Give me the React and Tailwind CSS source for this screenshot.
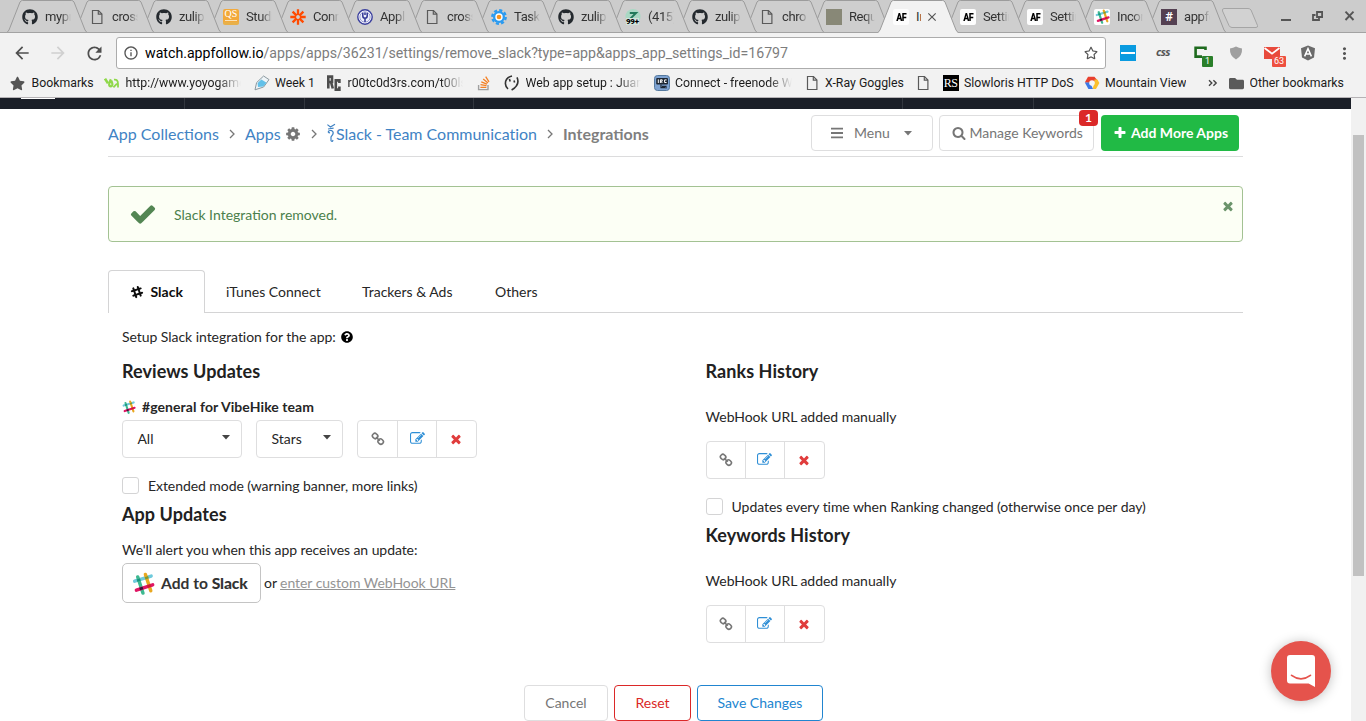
import React from "react";
import { FaGithub, FaSlackHash, FaQuestionCircle, FaStar, FaFolder, FaRegStar } from "react-icons/fa";
import { MdArrowBack, MdArrowForward, MdRefresh, MdInfoOutline, MdClose, MdMoreVert } from "react-icons/md";

const PATHS = {
  check: "M1671 566q0 40-28 68l-724 724-136 136q-28 28-68 28t-68-28l-136-136-362-362q-28-28-28-68t28-68l136-136q28-28 68-28t68 28l294 295 656-657q28-28 68-28t68 28l136 136q28 28 28 68z",
  times: "M1490 1322q0 40-28 68l-136 136q-28 28-68 28t-68-28l-294-294-294 294q-28 28-68 28t-68-28l-136-136q-28-28-28-68t28-68l294-294-294-294q-28-28-28-68t28-68l136-136q28-28 68-28t68 28l294 294 294-294q28-28 68-28t68 28l136 136q28 28 28 68t-28 68l-294 294 294 294q28 28 28 68z",
  plus: "M1600 736v192q0 40-28 68t-68 28h-416v416q0 40-28 68t-68 28h-192q-40 0-68-28t-28-68v-416h-416q-40 0-68-28t-28-68v-192q0-40 28-68t68-28h416v-416q0-40 28-68t68-28h192q40 0 68 28t28 68v416h416q40 0 68 28t28 68z",
  search: "M1216 832q0-185-131.5-316.5t-316.5-131.5-316.5 131.5-131.5 316.5 131.5 316.5 316.5 131.5 316.5-131.5 131.5-316.5zm512 832q0 52-38 90t-90 38q-54 0-90-38l-343-342q-179 124-399 124-143 0-273.5-55.5t-225-150-150-225-55.5-273.5 55.5-273.5 150-225 225-150 273.5-55.5 273.5 55.5 225 150 150 225 55.5 273.5q0 220-124 399l343 343q37 37 37 90z",
  cog: "M1152 896q0-106-75-181t-181-75-181 75-75 181 75 181 181 75 181-75 75-181zm512-109v222q0 12-8 23t-20 13l-185 28q-19 54-39 91 35 50 107 138 10 12 10 25t-9 23q-27 37-99 108t-94 71q-12 0-26-9l-138-108q-44 23-91 38-16 136-29 186-7 28-36 28h-222q-14 0-24.5-8.5t-11.5-21.5l-28-184q-49-16-90-37l-141 107q-10 9-25 9-14 0-25-11-126-114-165-168-7-10-7-23 0-12 8-23 15-21 51-66.5t54-70.5q-27-50-41-99l-183-27q-13-2-21-12.5t-8-23.5v-222q0-12 8-23t19-13l186-28q14-46 39-92-40-57-107-138-10-12-10-24 0-10 9-23 26-36 98.5-107.5t94.5-71.5q13 0 26 10l138 107q44-23 91-38 16-136 29-186 7-28 36-28h222q14 0 24.5 8.5t11.5 21.5l28 184q49 16 90 37l142-107q9-9 24-9 13 0 25 10 129 119 165 170 7 8 7 22 0 12-8 23-15 21-51 66.5t-54 70.5q26 50 41 98l183 28q13 2 21 12.5t8 23.5z",
  edit: "M888 1184l116-116-152-152-116 116v56h96v96h56zm440-720q-16-16-33 1l-350 350q-17 17-1 33t33-1l350-350q17-17 1-33zm80 594v190q0 119-84.5 203.5t-203.5 84.5h-832q-119 0-203.5-84.5t-84.5-203.5v-832q0-119 84.5-203.5t203.5-84.5h832q63 0 117 25 15 7 18 23 3 17-9 29l-49 49q-14 14-32 8-23-6-45-6h-832q-66 0-113 47t-47 113v832q0 66 47 113t113 47h832q66 0 113-47t47-113v-126q0-13 9-22l64-64q15-15 35-7t20 29zm-96-738l288 288-672 672h-288v-288zm444 132l-92 92-288-288 92-92q28-28 68-28t68 28l152 152q28 28 28 68t-28 68z",
};

function Glyph({ name, className }) {
  return (
    <svg viewBox="0 0 1792 1792" fill="currentColor" className={"shrink-0 " + className}>
      <path d={PATHS[name]} />
    </svg>
  );
}

function LinkGlyph() {
  return (
    <svg viewBox="0 0 14 14" fill="none" stroke="currentColor" strokeWidth="1.6" className="size-[14px]">
      <rect x="1.4" y="1.6" width="5.4" height="4.8" rx="2.2" transform="rotate(45 4.1 4)" />
      <rect x="7" y="7.2" width="5.4" height="4.8" rx="2.2" transform="rotate(45 9.7 9.6)" />
      <path d="M5 5 8.8 8.8" />
    </svg>
  );
}

function SlackColor({ className }) {
  return (
    <svg viewBox="0 0 24 24" fill="none" strokeWidth="3.6" strokeLinecap="round" className={"shrink-0 " + className}>
      <path d="M2.8 9.6 20 4.2" stroke="#6ecadc" />
      <path d="M14 2.6 19.6 19.6" stroke="#e9a820" />
      <path d="M6 5.2 11.4 22" stroke="#3eb991" />
      <path d="M4.6 19 21.6 13.4" stroke="#e01563" />
      <path d="M6.6 7.2 7.3 9.6" stroke="#1a937d" strokeLinecap="butt" />
      <path d="M15 4.8 15.8 7.2" stroke="#7a9a35" strokeLinecap="butt" />
      <path d="M9.3 16 10.1 18.6" stroke="#361238" strokeLinecap="butt" />
      <path d="M17.4 13.4 18.2 15.8" stroke="#cc2027" strokeLinecap="butt" />
    </svg>
  );
}

function PageIcon() {
  return (
    <svg viewBox="0 0 16 16" fill="none" stroke="#5a5a5a" strokeWidth="1.2" className="size-4 shrink-0">
      <path d="M3.5 1.5H9.5L12.9 5V14.5H3.5Z" />
      <path d="M9.3 1.5V5.2H12.9" />
    </svg>
  );
}

function Github() {
  return <FaGithub className="size-4 shrink-0 text-[#24292e]" />;
}

function AfIcon() {
  return (
    <span className="flex size-4 shrink-0 items-center justify-center rounded-[2px] bg-[#fdfdfd] pt-px text-[11px] leading-[15px] font-black tracking-[-0.5px] text-black">
      <span className="scale-x-[.82]">AF</span>
    </span>
  );
}

function StudyIcon() {
  return (
    <span className="flex size-4 shrink-0 flex-col items-center rounded-[2px] border-b-[3px] border-[#e8b04a] bg-[#f2a93b] font-['Liberation_Serif',serif] text-[10px] leading-[10px] text-white">
      QS
      <span className="mt-px h-px w-3 bg-[#fbe3b8]" />
    </span>
  );
}

function Burst() {
  return (
    <svg viewBox="0 0 16 16" stroke="#ff4a00" strokeWidth="2.3" className="size-4 shrink-0">
      <path d="M8 .3V6M8 10v5.7M.3 8H6M10 8h5.7M2.6 2.6 6.4 6.4M9.6 9.6l3.8 3.8M13.4 2.6 9.6 6.4M6.4 9.6l-3.8 3.8" />
      <circle cx="8" cy="8" r="2.6" fill="none" strokeWidth="1.4" />
    </svg>
  );
}

function AppRound() {
  return (
    <svg viewBox="0 0 16 16" className="size-4 shrink-0">
      <circle cx="8" cy="8" r="7.2" fill="#fff" stroke="#3a3f9e" strokeWidth="1.4" />
      <circle cx="8" cy="8" r="5.2" fill="#eceefa" stroke="#8084c8" strokeWidth=".8" />
      <path d="M5.8 4v3a2.2 2.2 0 0 0 4.4 0V4M8 3.4V6M8 9V13" fill="none" stroke="#2f3494" strokeWidth="1.5" />
    </svg>
  );
}

function GearBlue() {
  return (
    <svg viewBox="0 0 16 16" className="size-4 shrink-0">
      <circle cx="8" cy="8" r="6.7" fill="none" stroke="#2c9bf0" strokeWidth="2.4" strokeDasharray="3.1 2.16" />
      <circle cx="8" cy="8" r="6" fill="#2c9bf0" />
      <circle cx="8" cy="8" r="3.7" fill="#fff" />
      <circle cx="8" cy="8" r="2.3" fill="#f7931e" />
    </svg>
  );
}

function ZulipIcon() {
  return (
    <span className="relative size-4 shrink-0">
      <svg viewBox="0 0 16 16" className="size-4">
        <circle cx="8" cy="7.6" r="7.6" fill="#a9d8c4" />
        <path d="M4.8 4H11L5.4 9.6" fill="none" stroke="#22795a" strokeWidth="2" />
      </svg>
      <span className="absolute top-[9px] left-[1px] bg-[#d0e2da] text-[8px] leading-[7px] font-black tracking-[-0.3px] text-black">99+</span>
    </span>
  );
}

function SlackFav() {
  return (
    <span className="flex size-4 shrink-0 items-center justify-center rounded-[2px] bg-white">
      <SlackColor className="size-[15px]" />
    </span>
  );
}

function HashFav() {
  return <span className="flex size-4 shrink-0 items-center justify-center bg-[#544052] text-[13px] font-bold text-white">#</span>;
}

const TABS = [
  [Github, "mypr"],
  [PageIcon, "cross"],
  [Github, "zulip"],
  [StudyIcon, "Studi"],
  [Burst, "Conn"],
  [AppRound, "Appl"],
  [PageIcon, "cross"],
  [GearBlue, "Task"],
  [Github, "zulip"],
  [ZulipIcon, "(415)"],
  [Github, "zulip"],
  [PageIcon, "chro"],
  [null, "Requ"],
  [AfIcon, "In"],
  [AfIcon, "Settin"],
  [AfIcon, "Settin"],
  [SlackFav, "Incor"],
  [HashFav, "appfo"],
];

function Tab({ Icon, label, active, order }) {
  return (
    <div className="relative -mr-[13px] h-[33px] w-[80px] shrink-0" style={{ zIndex: order }}>
      <svg viewBox="0 0 80 33" className="absolute inset-0 h-[33px] w-[80px]">
        <path d="M0 33 L2 30 L13 2 Q14 .5 15.5 .5 H64.5 Q66 .5 67 2 L78 30 L80 33Z" fill={active ? "#f2f2f2" : "#cecece"} />
        <path d="M0 32.5 L2 30 L13 2 Q14 .5 15.5 .5 H64.5 Q66 .5 67 2 L78 30 L80 32.5" fill="none" stroke="#9c9c9c" strokeWidth="1" />
        {!active && <path d="M0 32.5H80" stroke="#a3a3a3" />}
      </svg>
      <div className="relative flex h-full items-center gap-[7px] pl-[15.5px]">
        {Icon ? <Icon /> : <span className="size-4 shrink-0 bg-[#888877]" />}
        {active ? (
          <>
            <span className="w-[5px] overflow-hidden text-[13px] text-[#333]">{label}</span>
            <MdClose className="-ml-[3px] size-[14px] shrink-0 text-[#555]" />
          </>
        ) : (
          <span className="w-[26px] overflow-hidden mask-r-from-60% text-[13px] tracking-[-0.4px] whitespace-nowrap text-[#333]">{label}</span>
        )}
      </div>
    </div>
  );
}

function TabStrip() {
  return (
    <div className="flex h-[33px] border-b border-[#a3a3a3] bg-[#cccccc] pl-[6.5px]">
      {TABS.map(([Icon, label], i) => (
        <Tab key={i} Icon={Icon} label={label} active={i === 13} order={i === 13 ? 40 : 30 - i} />
      ))}
      <svg viewBox="0 0 38 20" className="mt-2 ml-[8px] h-5 w-[38px] shrink-0">
        <path d="M3 .5H27Q29 .5 30 2L36.5 17.5Q37 19.5 35 19.5H11Q9 19.5 8 17.5L1.5 3Q1 .5 3 .5Z" fill="#d2d2d2" stroke="#a5a5a5" />
      </svg>
      <svg viewBox="0 0 80 16" fill="none" stroke="#555" strokeWidth="2" className="mt-2 ml-[21px] h-4 w-20 shrink-0">
        <path d="M1 12H11" />
        <path d="M37 4H42.1V9H37Z M35.5 7H33V12H39V10" strokeWidth="1.8" />
        <path d="M65.5 3.7 73.5 12M73.5 3.7 65.5 12" strokeWidth="1.9" />
      </svg>
    </div>
  );
}

function Toolbar() {
  return (
    <div className="flex h-10 items-center bg-[#f2f2f2]">
      <MdArrowBack className="ml-[12px] size-5 text-[#4f4f4f]" />
      <MdArrowForward className="ml-[16px] size-5 text-[#d0d0d0]" />
      <MdRefresh className="ml-[16px] size-[21px] text-[#4f4f4f]" />
      <div className="ml-[11px] flex h-8 w-[990px] items-center rounded-[3px] border border-[#acacac] bg-white pr-[7px] pl-[6px]">
        <MdInfoOutline className="size-4 text-[#555]" />
        <span className="mt-px ml-[6px] flex-1 text-[14.17px] text-[#7d7d7d]">
          <span className="text-black">watch.appfollow.io</span>/apps/apps/36231/settings/remove_slack?type=app&amp;apps_app_settings_id=16797
        </span>
        <FaRegStar className="size-[14px] text-[#555]" />
      </div>
      <span className="ml-[14px] flex size-4 items-center justify-center bg-[#0a9be0]">
        <span className="h-[2px] w-[14px] bg-white" />
      </span>
      <span className="ml-[20px] w-4 pb-[2px] font-['Open_Sans',sans-serif] text-[11px] leading-3 font-bold tracking-[-0.6px] text-[#555] italic">css</span>
      <span className="relative ml-[21px] size-4">
        <svg viewBox="0 0 16 16" className="size-4" fill="none" stroke="#1f6b1f" strokeWidth="2.6">
          <path d="M12.5 5V2.7H2.6V11.6H9" />
        </svg>
        <span className="absolute top-[11px] left-[9px] flex h-[11px] w-[11px] items-center justify-center rounded-[1px] bg-[#2a7f2a] text-[9px] leading-[11px] text-white">1</span>
      </span>
      <svg viewBox="0 0 16 16" className="ml-[19px] size-4">
        <path d="M8 1.5Q11 3 14 3.6 14.6 11 8 14.6 1.4 11 2 3.6 5 3 8 1.5Z" fill="#9f9f9f" />
      </svg>
      <span className="relative ml-[20px] size-4">
        <svg viewBox="0 0 16 16" className="size-4">
          <path d="M0 2H16V14H0Z" fill="#e84a3c" />
          <path d="M.5 3 8 8.6 15.5 3" fill="none" stroke="#fff" strokeWidth="1.7" />
        </svg>
        <span className="absolute top-[11px] left-[8px] flex h-[11px] w-[14px] items-center justify-center rounded-[1px] bg-[#ee5040] text-[9px] leading-[11px] text-white">63</span>
      </span>
      <svg viewBox="0 0 16 16" className="ml-[20px] size-4">
        <path d="M8 .6 15 3.2 14 12.4 8 15.6 2 12.4 1 3.2Z" fill="#6b6b6b" />
        <path d="M4.6 11.4 8 3.6 11.4 11.4M5.8 9H10.2" fill="none" stroke="#fff" strokeWidth="1.5" />
      </svg>
      <MdMoreVert className="ml-[19px] size-[19px] text-[#555]" />
    </div>
  );
}

function Bookmark({ icon, label, className, fade }) {
  return (
    <div className={"flex shrink-0 items-center gap-[5.5px] " + className}>
      {icon}
      {label && <span className={"overflow-hidden whitespace-nowrap " + (fade ? "flex-1 mask-r-from-80%" : "")}>{label}</span>}
    </div>
  );
}

function BookmarksBar() {
  return (
    <div className="flex h-[25px] items-start border-b border-[#b5b2b5] bg-[#f2f2f2] pt-[2px] pl-[10px] text-[12.3px] leading-4 text-[#1b1b1b]">
      <Bookmark className="w-[94px]" icon={<FaStar className="mr-px size-[15px] text-[#555]" />} label="Bookmarks" />
      <Bookmark
        className="w-[137px]"
        fade
        icon={
          <svg viewBox="0 0 16 16" fill="none" stroke="#8fd84a" strokeWidth="2.6" className="size-4 shrink-0">
            <path d="M1 3.6 4 8.4" />
            <path d="M6.8 4.2Q3.4 11 7 11.4 9.6 11 7.4 5.6" strokeWidth="2.2" />
            <path d="M10 4.6Q14 4 14 9V12.4M13 8.6 9.4 12.4" strokeWidth="1.8" />
          </svg>
        }
        label="http://www.yoyogames.com"
      />
      <Bookmark
        className="ml-[12.5px] w-[72px]"
        icon={
          <svg viewBox="0 0 16 16" className="size-4 shrink-0">
            <path d="M1 14.8 2.6 7.6 9.6 1 15 4.6 9.6 12Z" fill="#eef4f7" stroke="#8a989f" strokeWidth="1" />
            <path d="M3.6 8 7.4 4.6 12.6 7.8 9.2 11.6 4 12Z" fill="#62c0e8" />
          </svg>
        }
        label="Week 1"
      />
      <Bookmark
        className="ml-[.5px] w-[137px]"
        fade
        icon={
          <svg viewBox="0 0 16 16" fill="none" stroke="#4d4d4d" strokeWidth="2.6" className="size-4 shrink-0">
            <path d="M2.3 13.5V1.6H6V7H3M5 7 6.8 13.5M13.4 8V5.4H9.8V14.6H13.4V11.6" />
          </svg>
        }
        label="r00tc0d3rs.com/t00ls.html"
      />
      <Bookmark
        className="ml-[13px] w-[28px]"
        icon={
          <svg viewBox="0 0 16 16" fill="none" className="size-4 shrink-0">
            <path d="M2.6 10V14.6H12V10" stroke="#a0a0a0" strokeWidth="1.4" />
            <path d="M4.4 12.4H10.4M4.5 9.7 10.5 10.6M5.3 6.9 11 9.2M7.2 4 12 8M9.7 1.6 13 6.8" stroke="#f48024" strokeWidth="1.3" />
          </svg>
        }
      />
      <Bookmark
        className="w-[137px]"
        fade
        icon={
          <svg viewBox="0 0 16 16" fill="none" stroke="#333" strokeWidth="1.6" className="size-4 shrink-0">
            <path d="M8 1Q1.4 2.6 1.4 8.6 1.6 12 4 14M13 2.4Q16.4 10 7.6 15M5.4 4 6.2 6.4M10 5.4 10.6 7.4" />
          </svg>
        }
        label="Web app setup : Juan Carlos"
      />
      <Bookmark
        className="ml-[12.5px] w-[138px]"
        fade
        icon={
          <svg viewBox="0 0 16 16" className="size-4 shrink-0">
            <rect x=".5" y=".5" width="15" height="15" rx="3" fill="#7ea3d2" stroke="#55799f" />
            <rect x="2.2" y="3" width="11.8" height="6.4" rx="1" fill="#1d2733" />
            <path d="M4.3 4.4V8M6.4 8V4.8H8.2V6.2H6.6L8.4 8M12.6 4.9H10.6V7.5H12.6" fill="none" stroke="#fff" strokeWidth="1" />
            <path d="M7 9.4V12.6H11M8 11.4H12V13.6" fill="none" stroke="#1d2733" strokeWidth="1.2" />
          </svg>
        }
        label="Connect - freenode Web IRC"
      />
      <Bookmark className="ml-[12px] w-[100px]" icon={<PageIcon />} label="X-Ray Goggles" />
      <Bookmark className="ml-[11px] w-[16px]" icon={<PageIcon />} />
      <Bookmark
        className="ml-[12px] w-[131px]"
        icon={<span className="flex size-4 shrink-0 items-center justify-center bg-black font-['Liberation_Serif',serif] text-[12px] tracking-[-0.5px] text-white">RS</span>}
        label="Slowloris HTTP DoS"
      />
      <Bookmark
        className="ml-[10px] w-[103px]"
        icon={
          <svg viewBox="0 0 16 16" className="size-4 shrink-0">
            <path d="M.8 7.6 4 1.8H10.4L14 6 8 8Z" fill="#e8402e" />
            <path d="M10.4 4.6H13.4L15.4 8 12 14H8.6L10 9Z" fill="#fbc02d" />
            <path d="M.8 7.6H6L9 14H4.4Z" fill="#3b78e7" />
            <circle cx="8" cy="8" r="2.8" fill="#f5f5f5" />
          </svg>
        }
        label="Mountain View"
      />
      <svg viewBox="0 0 10 16" fill="none" stroke="#444" strokeWidth="1.4" className="ml-[21px] h-4 w-[10px]">
        <path d="M1 5.2 3.8 8 1 10.8M5.4 5.2 8.2 8 5.4 10.8" />
      </svg>
      <Bookmark className="ml-[11.5px]" icon={<FaFolder className="size-[15px] text-[#5a5a5a]" />} label="Other bookmarks" />
    </div>
  );
}

function Chevron() {
  return (
    <svg viewBox="0 0 6 10" fill="none" stroke="#777" strokeWidth="1.3" className="h-[10px] w-[6px] shrink-0">
      <path d="M1 1 5 5 1 9" />
    </svg>
  );
}

function Caret({ className }) {
  return (
    <svg viewBox="0 0 8 5" fill="currentColor" className={"h-[5px] w-2 " + className}>
      <path d="M0 0H8L4 4.4Z" />
    </svg>
  );
}

function PageHeader() {
  return (
    <div className="flex h-12 items-start border-b border-[#dcdcdd] pr-1">
      <div className="flex h-[50px] items-center text-[16px] leading-6 text-[#4183c4]">
        <span className="mb-px w-[111px] whitespace-nowrap">App Collections</span>
        <span className="ml-[10px]"><Chevron /></span>
        <span className="mb-px ml-[10px] w-[35px]">Apps</span>
        <Glyph name="cog" className="ml-[5px] size-[16px] text-[#767676]" />
        <span className="ml-[10px]"><Chevron /></span>
        <svg viewBox="0 0 10 20" fill="none" stroke="#4183c4" strokeWidth="1.2" className="mb-[3px] ml-[9px] h-5 w-[10px]">
          <path d="M1.4 1.6 4.4 4 9 1.2M2 6 7.6 5.2M2.2 9.4Q2.4 7 5.6 7.6 8 9 6.8 11.4L5 14V17.6Q6.4 19.4 7 17M2 9.4 4 9.8" />
        </svg>
        <span className="mb-px w-[201px] tracking-[-0.02px] whitespace-nowrap">Slack - Team Communication</span>
        <span className="ml-[10px]"><Chevron /></span>
        <span className="mb-px ml-[10px] font-bold text-[#7f7f7f]">Integrations</span>
      </div>
      <div className="mt-[6px] ml-auto flex gap-[6px] text-[14px] text-[#767676]">
        <div className="flex h-9 w-[122px] items-center rounded-[4px] border border-[#dededf] pl-[19px]">
          <svg viewBox="0 0 12 12" stroke="currentColor" strokeWidth="1.8" className="h-3 w-3">
            <path d="M0 1.6H12M0 6H12M0 10.4H12" />
          </svg>
          <span className="mb-px ml-[11px]">Menu</span>
          <Caret className="ml-[14px]" />
        </div>
        <div className="relative mr-px flex h-9 w-[155px] items-center rounded-[4px] border border-[#dededf] pl-[12px]">
          <Glyph name="search" className="size-[14px]" />
          <span className="mb-px ml-[3.5px] whitespace-nowrap">Manage Keywords</span>
          <span className="absolute -top-[6px] -right-[5px] flex h-4 w-[19px] items-center justify-center rounded-[4px] bg-[#db2828] text-[12px] leading-3 font-bold text-white">1</span>
        </div>
        <div className="flex h-9 w-[138px] items-center rounded-[4px] bg-[#21ba45] pl-[12px] font-bold text-white">
          <Glyph name="plus" className="size-[14px]" />
          <span className="mb-px ml-[4px] whitespace-nowrap">Add More Apps</span>
        </div>
      </div>
    </div>
  );
}

function IconButtons({ className }) {
  return (
    <div className={"flex h-[38px] rounded-[4px] border border-[#dededf] " + className}>
      <span className="flex flex-1 items-center justify-center pb-px text-[#767676]"><LinkGlyph /></span>
      <span className="flex w-[40px] items-center justify-center border-x border-[#dededf] text-[#2f8fd6]"><Glyph name="edit" className="mb-px size-[15px]" /></span>
      <span className="flex w-[39px] items-center justify-center pr-px text-[#e03c3c]"><Glyph name="times" className="size-[14px]" /></span>
    </div>
  );
}

function Select({ label, className }) {
  return (
    <div className={"flex h-[38px] items-center justify-between rounded-[4px] border border-[#dededf] pr-[11px] pl-[14.4px] " + className}>
      {label}
      <Caret className="mb-[3px] text-[#444]" />
    </div>
  );
}

function Check({ label }) {
  return (
    <div className="flex h-[18px] items-start">
      <span className="size-[17px] rounded-[3px] border border-[#d4d4d5]" />
      <span className="ml-[9px] tracking-[-0.06px] whitespace-nowrap">{label}</span>
    </div>
  );
}

function Heading({ children }) {
  return <h3 className="text-[18px] leading-[22px] font-bold tracking-[0.06px] text-[#212121]">{children}</h3>;
}

function Settings() {
  return (
    <div className="flex pl-[14px] text-[14px] leading-[18px] text-[#262626]">
      <div className="w-[583.6px] pt-[15px]">
        <p className="flex items-center tracking-[-0.05px]">
          Setup Slack integration for the app:
          <FaQuestionCircle className="ml-[5px] size-3 text-black" />
        </p>
        <div className="mt-[14px]"><Heading>Reviews Updates</Heading></div>
        <div className="mt-[16px] flex h-[18px] items-center font-bold tracking-[0.07px]">
          <SlackColor className="mr-[6px] size-[14px]" />
          #general for VibeHike team
        </div>
        <div className="mt-[4px] flex gap-[14px]">
          <Select label="All" className="w-[120px]" />
          <Select label="Stars" className="w-[87px]" />
          <IconButtons className="w-[120px]" />
        </div>
        <div className="mt-[19px]"><Check label="Extended mode (warning banner, more links)" /></div>
        <div className="mt-[8px]"><Heading>App Updates</Heading></div>
        <p className="mt-[16px] tracking-[-0.07px]">We'll alert you when this app receives an update:</p>
        <div className="mt-[4px] flex items-center">
          <div className="flex h-10 w-[139px] items-center rounded-[5px] border border-[#c4c4c4] pl-[8.5px] text-[15.6px] font-bold text-[#333]">
            <SlackColor className="mr-[6.5px] size-[23px]" />
            <span className="whitespace-nowrap">Add to <span className="font-black tracking-[-0.1px]">Slack</span></span>
          </div>
          <span className="ml-[3px]">or</span>
          <a className="ml-[3px] tracking-[-0.04px] text-[#949494] underline">enter custom WebHook URL</a>
        </div>
      </div>
      <div className="pt-[47px]">
        <Heading>Ranks History</Heading>
        <p className="mt-[26px] mb-[15px] tracking-[-0.03px]">WebHook URL added manually</p>
        <IconButtons className="w-[119.4px]" />
        <div className="mt-[19px]"><Check label="Updates every time when Ranking changed (otherwise once per day)" /></div>
        <div className="mt-[8px]"><Heading>Keywords History</Heading></div>
        <p className="mt-[26px] mb-[15px] tracking-[-0.03px]">WebHook URL added manually</p>
        <IconButtons className="w-[119.4px]" />
      </div>
    </div>
  );
}

function Page() {
  return (
    <div className="w-[1351px] bg-white font-['Lato',sans-serif]">
      <div className="flex h-[11px] bg-[#1b1f28]">
        <span className="ml-[21px] h-px w-[34px] bg-white" />
        <span className="ml-[129px] w-px bg-[#33373f]" />
        <span className="ml-[119px] w-px bg-[#33373f]" />
        <span className="ml-[168px] w-px bg-[#33373f]" />
        <span className="ml-[428px] w-px bg-[#33373f]" />
        <span className="ml-[130px] w-px bg-[#33373f]" />
      </div>
      <div className="ml-[108px] w-[1135px]">
        <PageHeader />
        <div className="mt-[29px] flex h-14 items-center rounded-[4px] border border-[#a3c293] bg-[#fcfff5] pl-[20px] text-[14px] text-[#4b7f4c]">
          <Glyph name="check" className="size-[28px] text-[#538653]" />
          <span className="ml-[17px]">Slack Integration removed.</span>
          <Glyph name="times" className="mr-[7px] mb-[16px] ml-auto size-[14px] text-[#6b946b]" />
        </div>
        <div className="mt-[28px] flex h-[43px] text-[14px] text-[#262626]">
          <div className="flex w-[97px] items-center rounded-t-[4px] border border-b-0 border-[#d4d4d5] pb-px pl-[21px] font-bold text-[#0d0d0d]">
            <FaSlackHash className="mr-[6.5px] size-[14px]" />
            Slack
          </div>
          <div className="flex flex-1 items-center border-b border-[#d4d4d5] pt-px pl-[21px]">
            <span className="w-[136px]">iTunes Connect</span>
            <span className="w-[133px]">Trackers &amp; Ads</span>
            <span>Others</span>
          </div>
        </div>
        <Settings />
        <div className="mt-[42px] ml-[416px] flex gap-[6px] text-[14px]">
          <span className="flex h-9 w-[84px] items-center justify-center rounded-[4px] border border-[#dededf] pb-px text-[#767676]">Cancel</span>
          <span className="flex h-9 w-[77px] items-center justify-center rounded-[4px] border border-[#db2828] pb-px text-[#db2828]">Reset</span>
          <span className="flex h-9 w-[126px] items-center justify-center rounded-[4px] border border-[#2185d0] pb-px text-[#2185d0]">Save Changes</span>
        </div>
      </div>
    </div>
  );
}

export default function App() {
  return (
    <div className="relative h-[721px] w-[1366px] overflow-hidden bg-white font-['Roboto',sans-serif]">
      <TabStrip />
      <Toolbar />
      <BookmarksBar />
      <div className="flex h-[623px]">
        <Page />
        <div className="w-[15px] bg-[#f1f1f1] pt-[37px] pl-[2px]">
          <div className="h-[441px] w-[11px] bg-[#c1c1c1]" />
        </div>
      </div>
      <div className="absolute top-[641px] left-[1271px] flex size-[60px] items-center justify-center rounded-full bg-[#e5534c] shadow-[0_1px_12px_rgba(0,0,0,0.25)]">
        <svg viewBox="0 0 28 32" className="h-8 w-7">
          <path d="M3 0H25Q28 0 28 3V32L21.6 28.6H3Q0 28.6 0 25.6V3Q0 0 3 0Z" fill="#fff" />
          <path d="M4.6 20.4Q14 27.4 23.4 20.4" fill="none" stroke="#e5534c" strokeWidth="1.8" strokeLinecap="round" />
        </svg>
      </div>
    </div>
  );
}
